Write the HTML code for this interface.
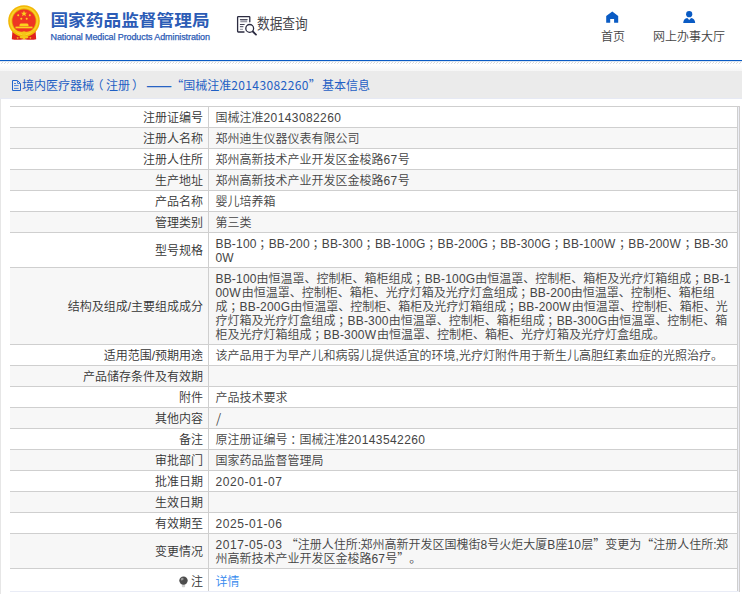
<!DOCTYPE html>
<html lang="zh-CN">
<head>
<meta charset="utf-8">
<title>国家药品监督管理局 数据查询</title>
<style>
html,body{margin:0;padding:0;}
body{width:742px;height:594px;overflow:hidden;background:#fff;position:relative;
  font-family:"Liberation Sans","Noto Sans CJK SC",sans-serif;font-size:12px;color:#3a3a3a;text-spacing-trim:space-all;}
.abs{position:absolute;white-space:nowrap;}
.cj{font-family:"Noto Sans CJK SC","Liberation Sans",sans-serif;}
td .cj,td .jp{line-height:0;}
.d{letter-spacing:0.4px;}
.dt{letter-spacing:0.55px;}
.e{letter-spacing:0.18px;}
.w{letter-spacing:1.1px;}
.jp{position:relative;left:2.7px;}
#title{left:50.400px;top:4.800px;font-size:17.700px;font-weight:bold;color:#2c5cb6;line-height:26px;letter-spacing:0;transform:scaleY(0.93);transform-origin:0 54%;}
#sub{left:50.5px;top:30.700px;font-size:9px;letter-spacing:-0.105px;color:#2c5cb6;line-height:12px;-webkit-text-stroke:0.25px #2c5cb6;}
#sq{left:257px;top:13px;font-size:15px;line-height:20px;color:#46464c;transform:scaleX(0.845);transform-origin:0 0;}
.nav{font-size:12px;line-height:14px;color:#444;font-weight:350;}
#blue{left:0;top:60px;width:742px;height:1px;background:#0a5bc4;}
#blue2{left:0;top:61px;width:742px;height:1px;background:#0a5bc4;opacity:.15;}
#hatch{left:0;top:61px;width:742px;height:3px;}
#fade{left:0;top:65px;width:742px;height:6px;background:linear-gradient(#fff,#f6f6f6);}
#box{left:0;top:71px;width:1px;height:523px;background:#e6e6e6;}
#rb1{left:738px;top:107px;width:1px;height:485px;background:#eceef5;}
#rb2{left:739px;top:106px;width:1px;height:486px;background:#cfcdcd;}
#rb3{left:738px;top:106px;width:2px;height:1px;background:#cfcdcd;}
#bar{left:0;top:71px;width:742px;height:27px;background:#ebebeb;border-bottom:1px solid #e6e9f4;}
#bartxt{left:22px;top:78px;font-size:12px;line-height:14px;color:#1f5fc4;}
table{position:absolute;left:10px;top:106px;width:728px;border-collapse:collapse;table-layout:fixed;}
td{font-weight:350;border-top:1px solid #cfcfcf;border-bottom:1px solid #cfcfcf;padding:4px 0 2px 0;line-height:14px;font-size:12px;white-space:nowrap;vertical-align:middle;overflow:hidden;}
td.l{width:193px;text-align:right;padding-right:5px;border-right:1px solid #cfcfcf;color:#333;}
td.v{padding-left:6.5px;border-right:1px solid #cfcfcf;color:#444;}
tr.g td{background:#f7f7f7;}
a{color:#3388ee;text-decoration:none;}
tr.last td{height:16px;padding:5px 0 1px 0;border-bottom-color:#e9ecf6;}
tr.last td.l{padding-right:5px;}
tr.last td.v{padding-left:6.5px;}
</style>
</head>
<body>
<!-- header -->
<svg class="abs" style="left:7px;top:4px" width="34" height="37" viewBox="0 0 34 37">
  <path d="M5.500 26 L4.800 35.300 Q10 36.400 17 35.200 Q24 36.400 29.200 35.300 L28.500 26 Z" fill="#e0231c"/>
  <circle cx="17" cy="17" r="15.800" fill="#f2b705"/>
  <circle cx="17" cy="17" r="14.300" fill="#fad22a"/>
  <circle cx="17" cy="17" r="12.400" fill="#e9a800"/>
  <circle cx="17" cy="17" r="11.600" fill="#ee3524"/>
  <polygon points="17,6.500 17.800,8.700 20.100,8.700 18.300,10.100 18.900,12.300 17,11 15.100,12.300 15.700,10.100 13.900,8.700 16.200,8.700" fill="#fbd21e"/>
  <circle cx="11.200" cy="11.200" r="1" fill="#fbd21e"/><circle cx="22.800" cy="11.200" r="1" fill="#fbd21e"/>
  <circle cx="14.300" cy="14.800" r="1" fill="#fbd21e"/><circle cx="19.700" cy="14.800" r="1" fill="#fbd21e"/>
  <path d="M12.500 20.800 L13.500 19.400 H20.500 L21.500 20.800 V22.200 H12.500 Z" fill="#fbd21e"/>
  <rect x="8.500" y="22.600" width="17" height="1.700" fill="#fbd21e"/>
  <path d="M6.500 25.500 Q17 30.500 27.500 25.500 L26.500 27.500 Q17 32 7.500 27.500 Z" fill="#f5c518"/>
  <ellipse cx="17" cy="33" rx="4.500" ry="1.600" fill="#f5c518"/>
  <path d="M9.500 33.600 L11.500 33 L11 35.200 Z M24.500 33.600 L22.500 33 L23 35.200 Z M16 34 H18 V35.600 H16 Z" fill="#f5c518"/>
  <circle cx="17" cy="29.500" r="2.200" fill="#f5c518"/>
</svg>
<div class="abs cj" id="title">国家药品监督管理局</div>
<div class="abs" id="sub">National Medical Products Administration</div>

<svg class="abs" style="left:236px;top:15px" width="22" height="21" viewBox="0 0 22 21" fill="none" stroke="#2b2b40" stroke-linecap="round">
  <path d="M13.800 6.800 V2.300 Q13.800 1.600 13.100 1.600 H2.300 Q1.600 1.600 1.600 2.300 V16.300 Q1.600 17 2.300 17 H8" stroke-width="1.300"/>
  <path d="M4.300 4.600 H11.200" stroke-width="0.900"/>
  <path d="M4.300 6.300 H11.200" stroke-width="2" stroke="#9a9aa6" stroke-linecap="butt"/>
  <path d="M4.300 9.500 H8.200" stroke-width="0.900"/>
  <path d="M4.300 11.700 H7" stroke-width="0.900"/>
  <path d="M4.300 14.300 H6.600" stroke-width="0.900" stroke="#8a8a98"/>
  <circle cx="13.700" cy="13.400" r="3.900" stroke-width="1.300"/>
  <path d="M16.800 16.500 L20 19.600" stroke-width="1.800"/>
</svg>
<div class="abs cj" id="sq">数据查询</div>

<svg class="abs" style="left:605px;top:10px" width="15" height="14" viewBox="0 0 15 14">
  <path d="M7.300 1.600 L13.200 6.100 V12.800 H9.100 V9.100 H5.200 V12.800 H1.200 V6.100 Z" fill="#0a5bc4"/>
</svg>
<div class="abs nav cj" style="left:601px;top:29px;">首页</div>
<svg class="abs" style="left:682px;top:10px" width="15" height="14" viewBox="0 0 15 14">
  <circle cx="7.200" cy="4.200" r="3.100" fill="#0a5bc4"/>
  <path d="M1.200 12.900 Q1.500 8.300 5.300 7.900 L7.200 9.900 L9.100 7.900 Q12.900 8.300 13.200 12.900 Z" fill="#0a5bc4"/>
</svg>
<div class="abs nav cj" style="left:653px;top:29px;">网上办事大厅</div>

<div class="abs" id="blue"></div>
<div class="abs" id="blue2"></div>
<svg class="abs" id="hatch" width="742" height="3" shape-rendering="crispEdges">
  <defs><pattern id="hp" width="3" height="3" patternUnits="userSpaceOnUse"><rect x="0" y="0" width="1" height="1" fill="#e3e3e3"/><rect x="2" y="1" width="1" height="1" fill="#d9d9d9"/><rect x="1" y="2" width="1" height="1" fill="#dedede"/></pattern></defs>
  <rect x="0" y="0" width="742" height="3" fill="url(#hp)"/>
</svg>
<div class="abs" id="fade"></div>

<div class="abs" id="box"></div><div class="abs" id="rb1"></div><div class="abs" id="rb2"></div><div class="abs" id="rb3"></div>
<div class="abs" id="bar"></div>
<svg class="abs" style="left:11px;top:79px" width="11" height="13" viewBox="0 0 11 13" fill="none" stroke="#2466cc" stroke-width="1">
  <path d="M1.500 1.500 H6.500 L9.500 4.500 V11.500 H1.500 Z"/>
  <path d="M6.500 2 V4.500 H9" stroke-width="0.900" stroke="#3a78d8"/>
  <path d="M3 4.500 H5 M3 6.600 H7.600 M3 9.400 H7.600" stroke-width="0.900" stroke="#3a78d8"/>
</svg>
<div class="abs cj" id="bartxt">境内医疗器械<span style="position:relative;left:-2.500px">（</span>注册<span style="position:relative;left:2px">）</span> <span style="display:inline-block;position:relative;left:2.200px;margin:0 1.800px;transform:scaleX(1.25);-webkit-text-stroke:0.45px #1f5fc4">——</span> “国械注准<span style="letter-spacing:0.4px">20143082260</span>”<span style="margin-left:1.200px">基本信息</span></div>

<table>
<tr><td class="l">注册证编号</td><td class="v">国械注准<span class="d">20143082260</span></td></tr>
<tr class="g"><td class="l">注册人名称</td><td class="v">郑州迪生仪器仪表有限公司</td></tr>
<tr><td class="l">注册人住所</td><td class="v">郑州高新技术产业开发区金梭路<span class="d">67</span>号</td></tr>
<tr class="g"><td class="l">生产地址</td><td class="v">郑州高新技术产业开发区金梭路<span class="d">67</span>号</td></tr>
<tr><td class="l">产品名称</td><td class="v">婴儿培养箱</td></tr>
<tr class="g"><td class="l">管理类别</td><td class="v">第三类</td></tr>
<tr><td class="l">型号规格</td><td class="v"><span class="ln" id="m1"><span class="e">BB-100</span><span class="jp">；</span><span class="e">BB-200</span><span class="jp">；</span><span class="e">BB-300</span><span class="jp">；</span><span class="e">BB-100G</span><span class="jp">；</span><span class="e">BB-200G</span><span class="jp">；</span><span class="e">BB-300G</span><span class="jp">；</span><span class="e">BB-100<span class="w">W</span></span><span class="jp">；</span><span class="e">BB-200<span class="w">W</span></span><span class="jp">；</span><span class="e">BB-30</span></span><br><span class="ln"><span class="e">0<span class="w">W</span></span></span></td></tr>
<tr class="g"><td class="l">结构及组成/主要组成成分</td><td class="v"><span class="ln" id="s1"><span class="e">BB-100</span>由恒温罩、控制柜、箱柜组成<span class="jp">；</span><span class="e">BB-100G</span>由恒温罩、控制柜、箱柜及光疗灯箱组成<span class="jp">；</span><span class="e">BB-1</span></span><br><span class="ln" id="s2"><span class="e">00<span class="w">W</span></span>由恒温罩、控制柜、箱柜、光疗灯箱及光疗灯盒组成<span class="jp">；</span><span class="e">BB-200</span>由恒温罩、控制柜、箱柜组</span><br><span class="ln" id="s3">成<span class="jp">；</span><span class="e">BB-200G</span>由恒温罩、控制柜、箱柜及光疗灯箱组成<span class="jp">；</span><span class="e">BB-200<span class="w">W</span></span>由恒温罩、控制柜、箱柜、光</span><br><span class="ln" id="s4">疗灯箱及光疗灯盒组成<span class="jp">；</span><span class="e">BB-300</span>由恒温罩、控制柜、箱柜组成<span class="jp">；</span><span class="e">BB-300G</span>由恒温罩、控制柜、箱</span><br><span class="ln" id="s5">柜及光疗灯箱组成<span class="jp">；</span><span class="e">BB-300<span class="w">W</span></span>由恒温罩、控制柜、箱柜、光疗灯箱及光疗灯盒组成。</span></td></tr>
<tr><td class="l">适用范围/预期用途</td><td class="v"><span class="ln" id="u1">该产品用于为早产儿和病弱儿提供适宜的环境<span class="e">,</span>光疗灯附件用于新生儿高胆红素血症的光照治疗。</span></td></tr>
<tr class="g"><td class="l">产品储存条件及有效期</td><td class="v">&nbsp;</td></tr>
<tr><td class="l">附件</td><td class="v">产品技术要求</td></tr>
<tr class="g"><td class="l">其他内容</td><td class="v"><span class="cj" style="font-size:13px;position:relative;left:0.5px">/</span></td></tr>
<tr><td class="l">备注</td><td class="v">原注册证编号<span class="jp">：</span>国械注准<span class="d">20143542260</span></td></tr>
<tr class="g"><td class="l">审批部门</td><td class="v">国家药品监督管理局</td></tr>
<tr><td class="l">批准日期</td><td class="v"><span class="dt">2020-01-07</span></td></tr>
<tr class="g"><td class="l">生效日期</td><td class="v">&nbsp;</td></tr>
<tr><td class="l">有效期至</td><td class="v"><span class="dt">2025-01-06</span></td></tr>
<tr class="g"><td class="l">变更情况</td><td class="v"><span class="ln" id="c1"><span class="dt" style="margin-right:0">2017-05-03</span> <span class="cj">“</span>注册人住所<span class="e" style="letter-spacing:-0.7px">:</span>郑州高新开发区国槐街<span class="e">8</span>号火炬大厦<span class="e">B</span>座<span class="e">10</span>层<span class="cj">”</span>变更为<span class="cj">“</span>注册人住所<span class="e" style="letter-spacing:-0.7px">:</span>郑</span><br><span class="ln" id="c2">州高新技术产业开发区金梭路<span class="e">67</span>号<span class="cj" style="display:inline-block;width:12px">”</span>。</span></td></tr>
<tr class="last"><td class="l"><svg width="9" height="12" viewBox="0 0 9 12" style="vertical-align:-2px;margin-right:3px"><rect x="2.900" y="8.300" width="3.200" height="2.900" rx="0.600" fill="#cfcfcf"/><circle cx="4.500" cy="4.600" r="4.200" fill="#4c4c4c"/><ellipse cx="3.200" cy="3.100" rx="1.500" ry="1.200" fill="#9a9a9a" transform="rotate(-35 3.200 3.100)"/></svg>注</td><td class="v"><a>详情</a></td></tr>
</table>
</body>
</html>
